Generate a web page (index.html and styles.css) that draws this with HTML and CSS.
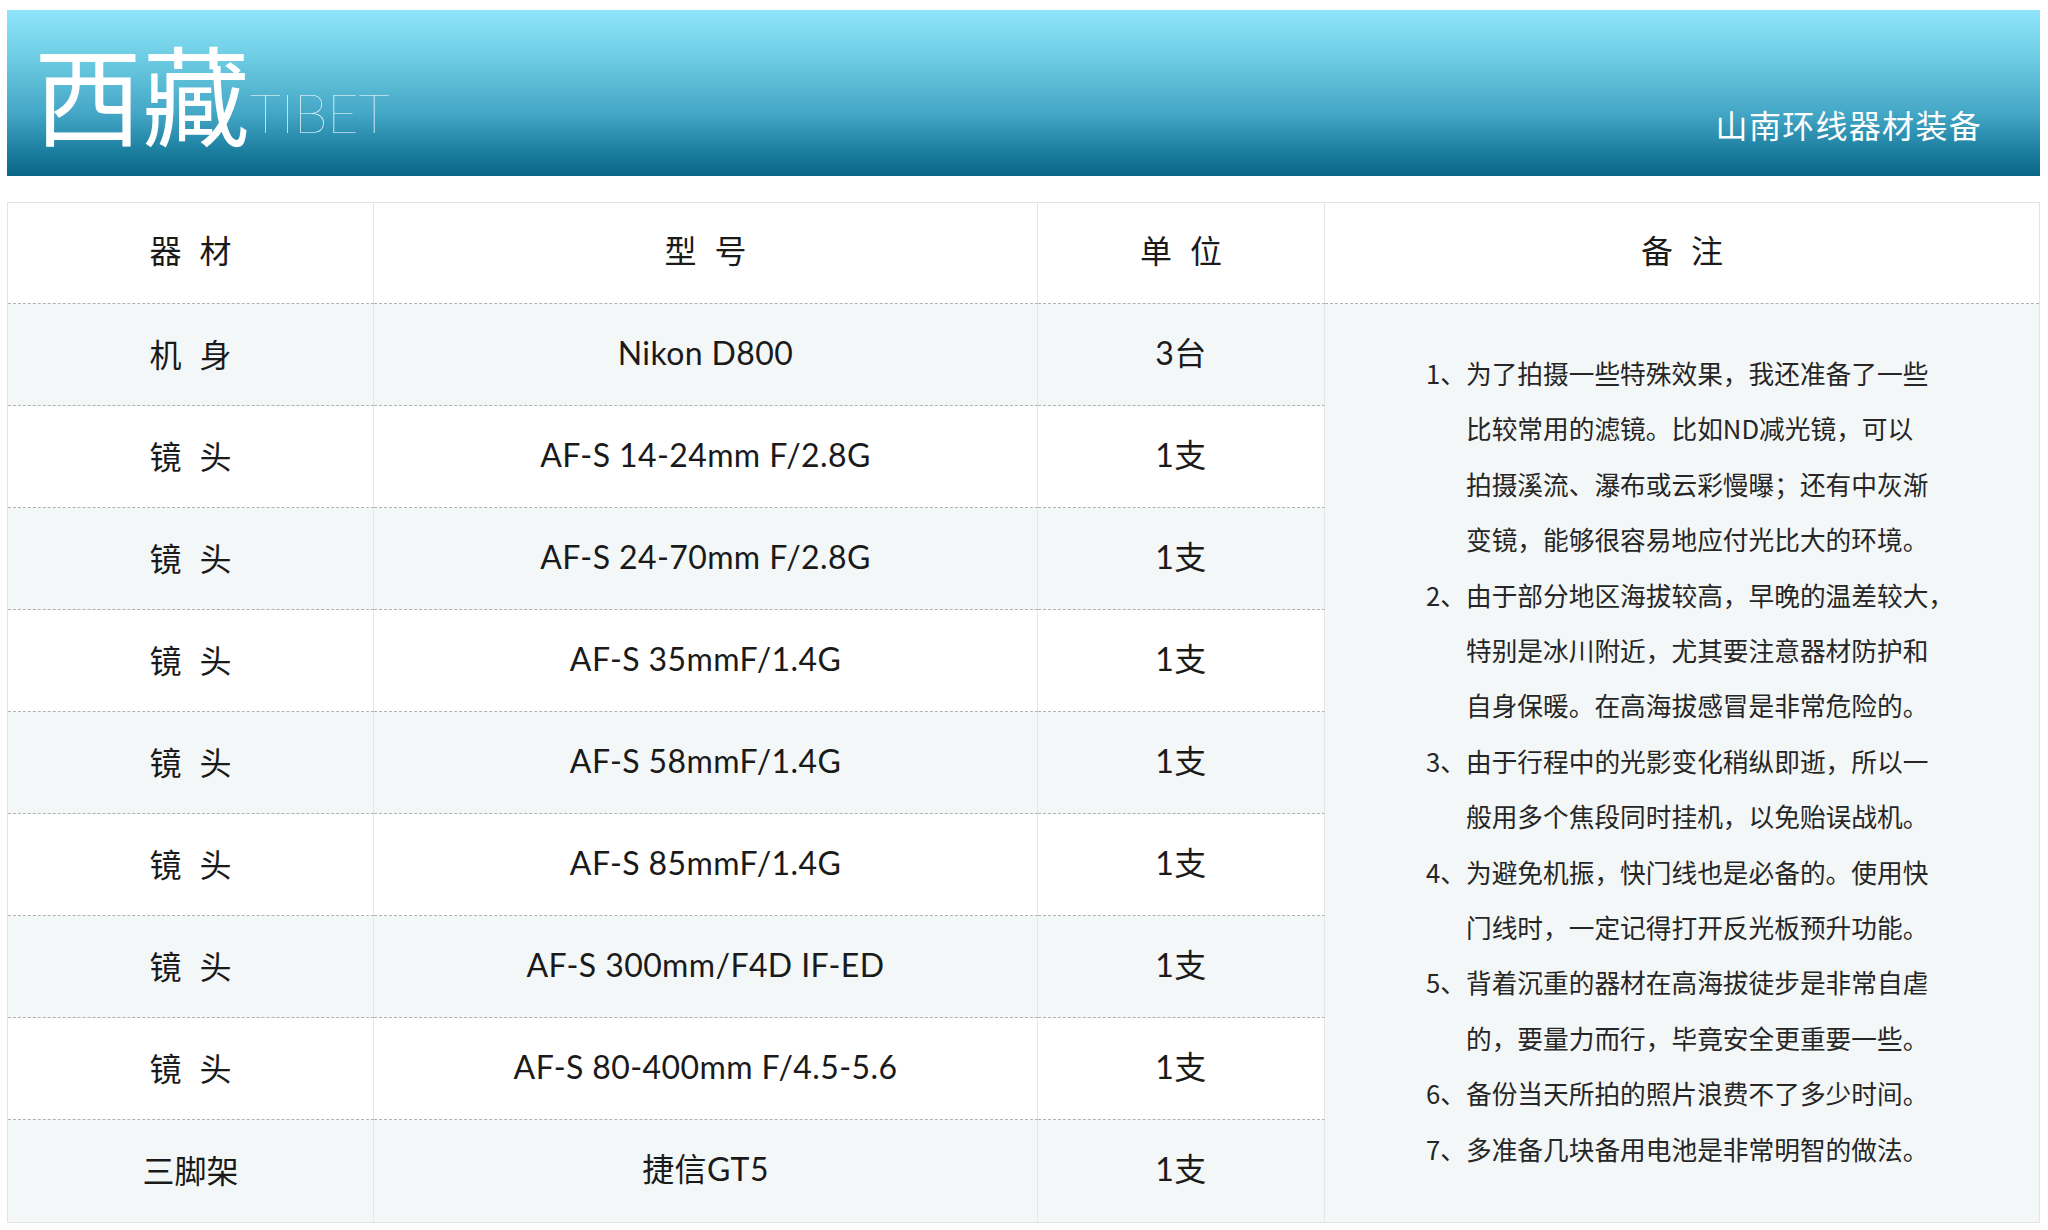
FILE: index.html
```html
<!DOCTYPE html>
<html lang="zh-CN">
<head>
<meta charset="utf-8">
<title>西藏 TIBET · 山南环线器材装备</title>
<link rel="stylesheet" href="styles.css">
</head>
<body>
<header class="banner">
  <h1 class="title">西藏<span class="title-en">TIBET</span></h1>
  <p class="subtitle">山南环线器材装备</p>
</header>

<section class="sheet">
  <div class="cell head spaced">器材</div>
  <div class="cell head spaced">型号</div>
  <div class="cell head spaced">单位</div>
  <div class="cell head spaced last">备注</div>

  <div class="cell odd spaced">机身</div>
  <div class="cell odd latin">Nikon D800</div>
  <div class="cell odd latin">3台</div>

  <div class="notes">
    <ol class="note-list">
      <li><span class="num">1、</span><span class="txt">为了拍摄一些特殊效果，我还准备了一些<br>比较常用的滤镜。比如ND减光镜，可以<br>拍摄溪流、瀑布或云彩慢曝；还有中灰渐<br>变镜，能够很容易地应付光比大的环境。</span></li>
      <li><span class="num">2、</span><span class="txt">由于部分地区海拔较高，早晚的温差较大，<br>特别是冰川附近，尤其要注意器材防护和<br>自身保暖。在高海拔感冒是非常危险的。</span></li>
      <li><span class="num">3、</span><span class="txt">由于行程中的光影变化稍纵即逝，所以一<br>般用多个焦段同时挂机，以免贻误战机。</span></li>
      <li><span class="num">4、</span><span class="txt">为避免机振，快门线也是必备的。使用快<br>门线时，一定记得打开反光板预升功能。</span></li>
      <li><span class="num">5、</span><span class="txt">背着沉重的器材在高海拔徒步是非常自虐<br>的，要量力而行，毕竟安全更重要一些。</span></li>
      <li><span class="num">6、</span><span class="txt">备份当天所拍的照片浪费不了多少时间。</span></li>
      <li><span class="num">7、</span><span class="txt">多准备几块备用电池是非常明智的做法。</span></li>
    </ol>
  </div>

  <div class="cell spaced">镜头</div>
  <div class="cell latin">AF-S 14-24mm F/2.8G</div>
  <div class="cell latin">1支</div>

  <div class="cell odd spaced">镜头</div>
  <div class="cell odd latin">AF-S 24-70mm F/2.8G</div>
  <div class="cell odd latin">1支</div>

  <div class="cell spaced">镜头</div>
  <div class="cell latin">AF-S 35mmF/1.4G</div>
  <div class="cell latin">1支</div>

  <div class="cell odd spaced">镜头</div>
  <div class="cell odd latin">AF-S 58mmF/1.4G</div>
  <div class="cell odd latin">1支</div>

  <div class="cell spaced">镜头</div>
  <div class="cell latin">AF-S 85mmF/1.4G</div>
  <div class="cell latin">1支</div>

  <div class="cell odd spaced">镜头</div>
  <div class="cell odd latin">AF-S 300mm/F4D IF-ED</div>
  <div class="cell odd latin">1支</div>

  <div class="cell spaced">镜头</div>
  <div class="cell latin">AF-S 80-400mm F/4.5-5.6</div>
  <div class="cell latin">1支</div>

  <div class="cell odd end">三脚架</div>
  <div class="cell odd latin end">捷信GT5</div>
  <div class="cell odd latin end">1支</div>
</section>
</body>
</html>
```

FILE: styles.css
```css
* {
  box-sizing: border-box;
}

html, body {
  margin: 0;
  padding: 0;
  background: #ffffff;
}

body {
  font-family: "Noto Sans CJK SC", "Lato", sans-serif;
  color: #1a1a1a;
}

/* ---------- banner ---------- */
.banner {
  margin: 10px 0 0 7px;
  width: 2033px;
  height: 166px;
  display: flex;
  justify-content: space-between;
  align-items: flex-start;
  background: linear-gradient(to bottom, #8fe6fb 0%, #6ccbe2 30%, #44a7c6 62%, #1c7fa0 85%, #0a6586 100%);
  color: #ffffff;
}

.title {
  margin: 0;
  padding: 27px 0 0 27px;
  font-family: "Noto Sans CJK SC", sans-serif;
  font-weight: 400;
  font-size: 108px;
  line-height: 108px;
  white-space: nowrap;
}

.title-en {
  font-family: "Lato", "Inter", sans-serif;
  font-weight: 100;
  font-size: 54px;
  letter-spacing: 0;
  color: #ffffff;
  margin-left: 0;
  vertical-align: 5px;
}

.subtitle {
  margin: 0;
  padding: 94px 58px 0 0;
  font-family: "Noto Sans CJK SC", sans-serif;
  font-size: 32px;
  line-height: 40px;
  letter-spacing: 1.3px;
  white-space: nowrap;
}

/* ---------- table ---------- */
.sheet {
  margin: 26px 0 0 7px;
  width: 2033px;
  border: 1px solid #e3e3e3;
  display: grid;
  grid-template-columns: 366px 664px 287px 1fr;
  grid-template-rows: 101px repeat(9, 102px);
}

.cell {
  display: flex;
  align-items: center;
  justify-content: center;
  padding-bottom: 4px;
  font-size: 32px;
  line-height: 1;
  color: #1a1a1a;
  border-right: 1px solid #e6e6e6;
  border-bottom: 1px dashed #b2b2b2;
  white-space: nowrap;
  background: #ffffff;
}

.cell.head {
  padding-bottom: 9px;
}

.cell.head.last {
  border-right: none;
}

.cell.odd {
  background: #f4f7f7;
}

.cell.end {
  border-bottom: none;
}

.spaced {
  letter-spacing: 18px;
  padding-left: 18px;
}

.latin {
  font-family: "Lato", "Noto Sans CJK SC", sans-serif;
  letter-spacing: 0.4px;
}

/* ---------- notes ---------- */
.notes {
  grid-column: 4;
  grid-row: 2 / span 9;
  background: #f4f7f7;
  display: flex;
  align-items: center;
  padding-left: 101px;
  padding-bottom: 5px;
}

.note-list {
  list-style: none;
  margin: 0;
  padding: 0;
  font-family: "Noto Sans CJK SC", sans-serif;
  font-size: 25.7px;
  line-height: 55.4px;
  color: #262626;
}

.note-list li {
  display: flex;
  white-space: nowrap;
}

.num {
  flex: 0 0 40px;
  width: 40px;
}
```
